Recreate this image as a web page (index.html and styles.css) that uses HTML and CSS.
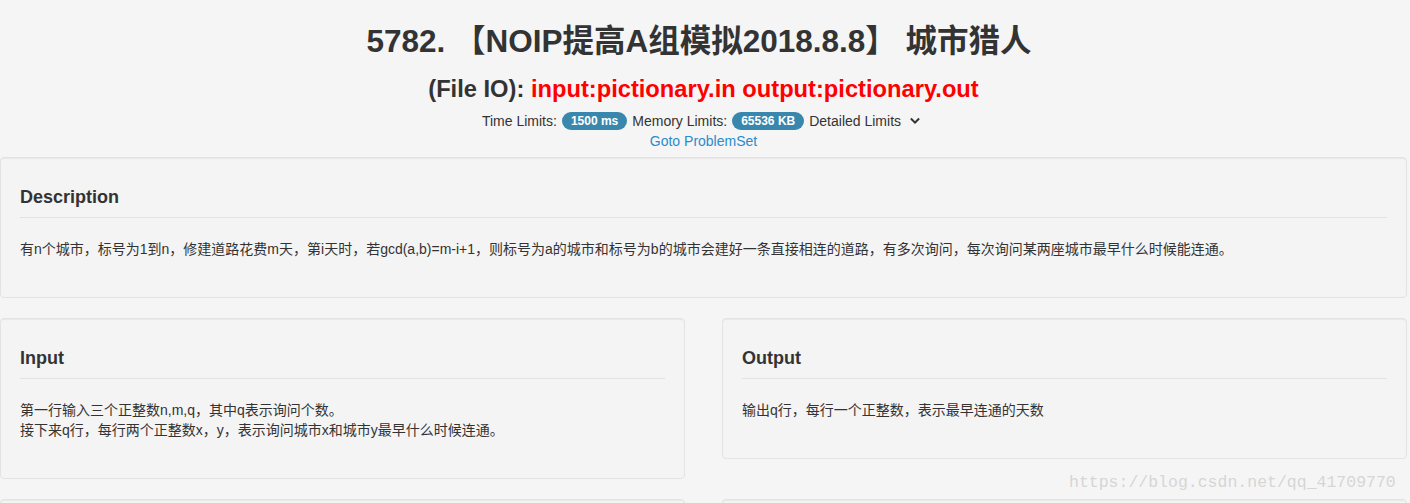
FILE: index.html
```html
<!DOCTYPE html>
<html lang="zh-CN">
<head>
<meta charset="utf-8">
<title>5782. 城市猎人</title>
<link rel="stylesheet" href="styles.css">
</head>
<body>
<div class="page">
  <header class="problem-head">
    <h1 class="title">5782. 【NOIP提高A组模拟2018.8.8】 城市猎人</h1>
    <h3 class="fileio">(File IO): <span class="io">input:pictionary.in output:pictionary.out</span></h3>
    <div class="limits">
      <span>Time Limits:</span>
      <span class="badge">1500 ms</span>
      <span>Memory Limits:</span>
      <span class="badge">65536 KB</span>
      <span>Detailed Limits</span>
      <svg class="chev" width="12" height="9" viewBox="0 0 12 9"><path d="M1.2 2.2 L2.6 0.8 L6 4.2 L9.4 0.8 L10.8 2.2 L6 7 Z" fill="#333"/></svg>
    </div>
    <div class="goto"><a href="#">Goto ProblemSet</a></div>
  </header>

  <section class="well">
    <h4 class="well-title">Description</h4>
    <div class="well-body">有n个城市，标号为1到n，修建道路花费m天，第i天时，若gcd(a,b)=m-i+1，则标号为a的城市和标号为b的城市会建好一条直接相连的道路，有多次询问，每次询问某两座城市最早什么时候能连通。</div>
  </section>

  <div class="row">
    <section class="well">
      <h4 class="well-title">Input</h4>
      <div class="well-body">第一行输入三个正整数n,m,q，其中q表示询问个数。<br>接下来q行，每行两个正整数x，y，表示询问城市x和城市y最早什么时候连通。</div>
    </section>
    <section class="well">
      <h4 class="well-title">Output</h4>
      <div class="well-body">输出q行，每行一个正整数，表示最早连通的天数</div>
    </section>
  </div>

  <div class="row">
    <section class="well well-next"></section>
    <section class="well well-next"></section>
  </div>

  <div class="watermark">https://blog.csdn.net/qq_41709770</div>
</div>
</body>
</html>
```

FILE: styles.css
```css
html, body {
  margin: 0;
  padding: 0;
  background: #f5f5f5;
}
body {
  font-family: "Liberation Sans", "Noto Sans CJK SC", sans-serif;
  font-size: 14px;
  color: #333;
}
.page {
  position: relative;
  width: 1407px;
}
.problem-head {
  text-align: center;
  padding-top: 23px;
}
.title {
  margin: 0;
  padding-right: 9px;
  font-size: 31.5px;
  line-height: 36px;
  font-weight: bold;
  color: #333;
}
.fileio {
  margin: 15px 0 0;
  font-size: 23.7px;
  line-height: 30px;
  font-weight: bold;
  color: #333;
}
.io {
  color: #ff0000;
}
.limits {
  margin-top: 7px;
  line-height: 20px;
  font-size: 14px;
  display: flex;
  justify-content: center;
  align-items: center;
  gap: 5px;
  padding-right: 4px;
}
.badge {
  display: inline-block;
  background: #3a87ad;
  color: #fff;
  font-size: 12px;
  font-weight: bold;
  line-height: 14px;
  padding: 2px 9px;
  border-radius: 9px;
}
.chev {
  display: block;
  margin-left: 3px;
}
.goto {
  line-height: 20px;
}
.goto a {
  color: #2a8bcd;
  text-decoration: none;
}
.well {
  background: #f4f4f4;
  border: 1px solid #e3e3e3;
  border-radius: 4px;
  box-shadow: inset 0 1px 1px rgba(0,0,0,0.05);
  padding: 28px 19px 38px;
}
.well-next {
  min-height: 60px;
}
.problem-head + .well {
  margin-top: 6px;
}
.well-title {
  margin: 0;
  font-size: 18px;
  line-height: 22px;
  font-weight: bold;
  color: #333;
  padding-bottom: 9px;
  border-bottom: 1px solid #e2e2e2;
}
.well-body {
  margin-top: 21px;
  line-height: 20px;
  font-size: 14px;
}
.row {
  display: grid;
  grid-template-columns: 685px 685px;
  column-gap: 37px;
  align-items: start;
  margin-top: 20px;
}
.watermark {
  position: absolute;
  left: 1069px;
  top: 472px;
  font-family: "Liberation Mono", monospace;
  font-size: 16.5px;
  line-height: 22px;
  color: #d6d6d6;
  white-space: nowrap;
}
```
